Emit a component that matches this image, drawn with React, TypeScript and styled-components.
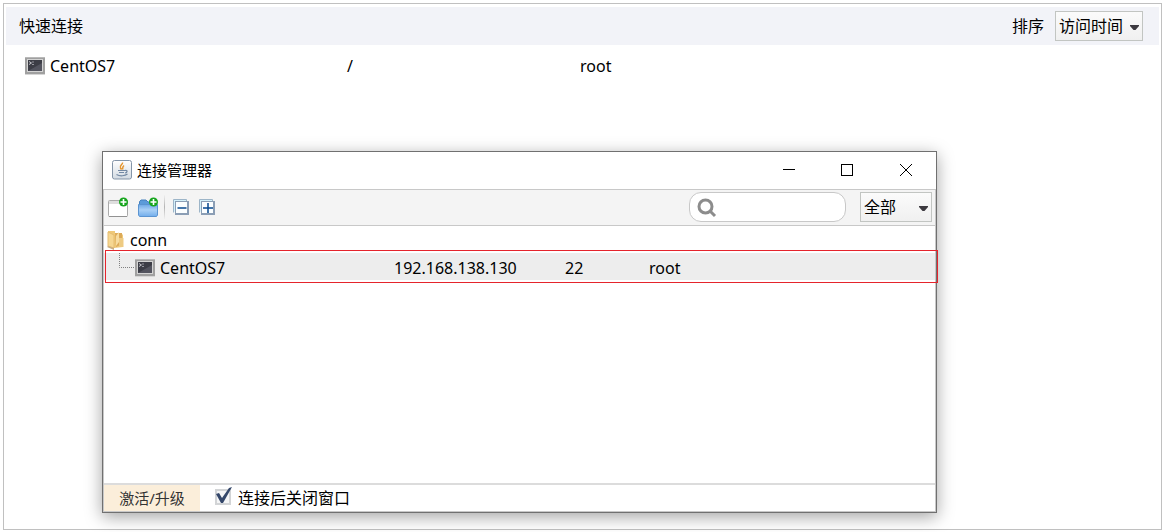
import React from "react";
import styled, { createGlobalStyle } from "styled-components";

const GlobalStyle = createGlobalStyle`
  *, *::before, *::after { box-sizing: border-box; }
  body {
    margin: 0;
    background: #fff;
    color: #000;
    font: 16px/22px "Noto Sans", "Noto Sans CJK SC", sans-serif;
  }
  button, input, select { font: inherit; color: inherit; }
  svg { display: block; flex: none; }
`;

const Page = styled.main`
  position: relative;
  display: flow-root;
  min-height: 100vh;
`;

const Frame = styled.section`
  margin: 3px 4px 2px 3px;
  min-height: calc(100vh - 5px);
  padding: 3px 2px;
  border: 1px solid #c0c0c0;
`;

const Header = styled.header`
  display: flex;
  align-items: center;
  justify-content: space-between;
  height: 38px;
  padding: 0 16px 0 13px;
  background: #f2f3f8;
`;

const Heading = styled.h1`
  margin: 0;
  font-size: 16px;
  font-weight: 400;
`;

const SortLabel = styled.label`
  display: flex;
  align-items: center;
  gap: 11px;
`;

const SelectBox = styled.span<{ $width: number }>`
  position: relative;
  display: block;
  width: ${(p) => p.$width}px;
`;

const Select = styled.select`
  display: block;
  appearance: none;
  width: 100%;
  height: 30px;
  padding: 0 0 0 3px;
  border: 1px solid #c2c5c2;
  border-radius: 0;
  background: linear-gradient(#fbfbfb, #f0f0f0);
`;

const Arrow = styled.svg`
  position: absolute;
  right: 4px;
  top: 14px;
  pointer-events: none;
`;

const Table = styled.table`
  width: 100%;
  border-collapse: collapse;
  table-layout: fixed;
`;

const QuickTable = styled(Table)`
  margin-top: 7px;
`;

const Cell = styled.td<{ $width?: number; $indent?: number; $height: number }>`
  width: ${(p) => (p.$width ? `${p.$width}px` : "auto")};
  height: ${(p) => p.$height}px;
  padding: 0 0 0 ${(p) => p.$indent ?? 0}px;
  white-space: nowrap;
`;

const TreeCell = styled(Cell)`
  padding-top: 2px;
`;

const IconText = styled.span`
  display: flex;
  align-items: center;
  gap: 5px;
`;

const Dialog = styled.section`
  position: absolute;
  left: 102px;
  right: 229px;
  top: 151px;
  border: 1px solid #707070;
  background: #fff;
  box-shadow: 0 4px 16px rgba(0, 0, 0, 0.36);
`;

const TitleBar = styled.header`
  display: flex;
  align-items: center;
  height: 37px;
  padding: 0 1px 2px 9px;
`;

const Title = styled.h2`
  flex: 1;
  margin: 0 0 0 5px;
  font-size: 15px;
  font-weight: 400;
`;

const CaptionButton = styled.button`
  display: grid;
  place-items: center;
  width: 58px;
  height: 35px;
  padding: 0;
  border: 0;
  background: transparent;
`;

const Body = styled.div`
  border: 1px solid #c8c8c8;
`;

const Toolbar = styled.div`
  display: flex;
  align-items: center;
  height: 36px;
  padding: 0 3px 1px 2px;
  border-bottom: 1px solid #c8c8c8;
  background: #f4f4f4;
`;

const ToolGroup = styled.div`
  display: flex;
  gap: 6px;
`;

const ToolButton = styled.button<{ $width: number }>`
  display: grid;
  place-items: center;
  width: ${(p) => p.$width}px;
  height: 24px;
  padding: 0;
  border: 0;
  background: transparent;
`;

const Divider = styled.span`
  width: 1px;
  height: 24px;
  margin: 0 6px 0 4px;
  background: linear-gradient(#f0f0f0, #b4b4b4, #f0f0f0);
`;

const Search = styled.label`
  display: flex;
  align-items: center;
  width: 157px;
  height: 30px;
  margin: 0 14px 0 auto;
  padding: 2px 8px 0 7px;
  border: 1px solid #c8c8c8;
  border-radius: 12px;
  background: #fff;
`;

const SearchInput = styled.input`
  flex: 1;
  min-width: 0;
  padding: 0 0 0 4px;
  border: 0;
  outline: 0;
  background: transparent;
`;

const Tree = styled.div`
  min-height: 257px;
`;

const Folder = styled.div`
  display: flex;
  align-items: center;
  gap: 5px;
  height: 27px;
  padding-left: 3px;
`;

const Selected = styled.div`
  position: relative;
  background: #ededed;

  &::after {
    content: "";
    position: absolute;
    inset: -3px -3px -3px 1px;
    border: 1px solid #e5242c;
    pointer-events: none;
  }
`;

const Branch = styled.svg`
  position: absolute;
  left: 15px;
  top: 0;
`;

const Footer = styled.footer`
  display: flex;
  align-items: center;
  border-top: 2px solid #dcdcdc;
  height: 28px;
`;

const Upgrade = styled.button`
  width: 96px;
  height: 26px;
  padding: 0;
  border: 0;
  background: #fbeeda;
  color: #333;
  font-size: 15px;
`;

const Check = styled.label`
  position: relative;
  display: flex;
  align-items: center;
  gap: 7px;
  margin-left: 15px;
`;

const CheckInput = styled.input`
  appearance: none;
  width: 16px;
  height: 16px;
  margin: 0 0 2px;
  border: 2px solid #d2d4d6;
  background: #f4f5f6;

  &:not(:checked) + svg { display: none; }
`;

const Tick = styled.svg`
  position: absolute;
  left: 0;
  top: 0;
  pointer-events: none;
`;

const DropArrow = () => (
  <Arrow width="9" height="5" viewBox="0 0 9 5" aria-hidden="true">
    <path d="M0 0H9V1L5.5 5H3.5L0 1Z" fill="#3d3a40" />
  </Arrow>
);

const TerminalIcon = () => (
  <svg width="20" height="18" viewBox="0 0 20 18" aria-hidden="true">
    <rect width="20" height="17" fill="#a0a0a0" />
    <path d="M0 0H20V1H0Z" fill="#b9b9b9" />
    <path d="M0 17H20V18H0Z" fill="#d6d6d6" />
    <rect x="2" y="2" width="16" height="13" fill="#d4d4d4" />
    <rect x="3" y="3" width="14" height="11" fill="#3c3d46" />
    <path d="M3 14L17 6V14Z" fill="#53545f" />
    <path d="M4 4.5L6.5 6L4 7.5" stroke="#c4c4ca" fill="none" />
    <path d="M7 5H9M7 7.5H9" stroke="#94959d" />
  </svg>
);

const JavaIcon = () => (
  <svg width="20" height="20" viewBox="0 0 20 20" aria-hidden="true">
    <defs>
      <linearGradient id="java-tile" x2="0" y2="1">
        <stop stopColor="#fff" />
        <stop offset="1" stopColor="#d3dbe3" />
      </linearGradient>
    </defs>
    <rect x=".5" y=".5" width="19" height="18.5" rx="2" fill="url(#java-tile)" stroke="#8495a8" />
    <path d="M10.5 2.5C11 4.5 7 5.5 8.5 8L9.5 9.5M12 5.5C10 7 11 8 10.5 9.5" fill="none" stroke="#e5952c" strokeWidth="1.5" />
    <path d="M6 10.5H13M7 12.5H12M13 10.5C16 10 15.5 12.5 13 13M4.500 14.500C8 16.500 13 16 15.500 14" fill="none" stroke="#7389a4" strokeWidth="1.2" />
  </svg>
);

const PlusBadge = () => (
  <>
    <circle cx="15.5" cy="5" r="4.5" fill="#16a51d" />
    <path d="M12.500 5H18.500M15.500 2V8" stroke="#fff" strokeWidth="1.6" />
  </>
);

const NewWindowIcon = () => (
  <svg width="20" height="20" viewBox="0 0 20 20" aria-hidden="true">
    <rect x=".5" y="3.5" width="19" height="16" rx="1" fill="#fff" stroke="#aaa" />
    <path d="M1 4H19V7H1Z" fill="#dedede" />
    <path d="M1 19.5H19" stroke="#929292" />
    <PlusBadge />
  </svg>
);

const NewFolderIcon = () => (
  <svg width="20" height="20" viewBox="0 0 20 20" aria-hidden="true">
    <defs>
      <linearGradient id="blue-folder" x2="0" y2="1">
        <stop stopColor="#6da7e5" />
        <stop offset=".45" stopColor="#a9d0f6" />
        <stop offset="1" stopColor="#72adeb" />
      </linearGradient>
    </defs>
    <path d="M1.5 8V4.5L3 3H8L10 5H18.5V8" fill="#5c9bd9" stroke="#4580bd" />
    <path d="M.5 7.5H19.5V18L18.5 19.5H1.5L.5 18Z" fill="url(#blue-folder)" stroke="#5b94d1" />
    <PlusBadge />
  </svg>
);

const StackIcon = ({ plus }: { plus?: boolean }) => (
  <svg width="16" height="16" viewBox="0 0 16 16" aria-hidden="true">
    <path d="M.5 13.500V.5H13.500V3" fill="#d4f0fa" stroke="#9db5c8" />
    <rect x="2.500" y="2.500" width="13" height="13" fill="#fbfeff" stroke="#8b9eb5" />
    <path d="M3 14.500H15M14.500 3V15" stroke="#8b9eb5" />
    <path d={plus ? "M4 9H14M9 4V14" : "M4.500 9H13.500"} stroke="#07488f" strokeWidth="1.5" />
  </svg>
);

const ConnFolderIcon = () => (
  <svg width="18" height="20" viewBox="0 0 18 20" aria-hidden="true">
    <path d="M1 1H8V3H14L16 5V17L7 18L1 17Z" fill="#efc979" />
    <path d="M8 3H15V14L9 17Z" fill="#dcaa59" />
    <path d="M9 6L12 2V12L9 16Z" fill="#f7dca0" />
    <path d="M1 2L7 5V18L1 16Z" fill="#f6d791" stroke="#e6bd70" />
    <path d="M12 8H16.500V17H12Z" fill="#eecb83" />
    <path d="M0 17L7 20V18L1 16Z" fill="#c9ad83" />
  </svg>
);

const connections = [{ name: "CentOS7", host: "192.168.138.130", port: "22", user: "root" }];
const recent = [{ name: "CentOS7", path: "/", user: "root" }];

export default function App() {
  return (
    <Page>
      <GlobalStyle />
      <Frame>
        <Header>
          <Heading>快速连接</Heading>
          <SortLabel>
            排序
            <SelectBox $width={88}>
              <Select defaultValue="time">
                <option value="time">访问时间</option>
              </Select>
              <DropArrow />
            </SelectBox>
          </SortLabel>
        </Header>
        <QuickTable>
          <tbody>
            {recent.map((r) => (
              <tr key={r.name}>
                <Cell $height={28} $width={341} $indent={19}>
                  <IconText><TerminalIcon />{r.name}</IconText>
                </Cell>
                <Cell $height={28} $width={233}>{r.path}</Cell>
                <Cell $height={28}>{r.user}</Cell>
              </tr>
            ))}
          </tbody>
        </QuickTable>
      </Frame>

      <Dialog role="dialog" aria-labelledby="manager-title">
        <TitleBar>
          <JavaIcon />
          <Title id="manager-title">连接管理器</Title>
          <CaptionButton aria-label="最小化">
            <svg width="14" height="12" viewBox="0 0 14 12"><path d="M0 5.5H12" stroke="#000" /></svg>
          </CaptionButton>
          <CaptionButton aria-label="最大化">
            <svg width="14" height="12" viewBox="0 0 14 12"><rect x=".5" y=".5" width="11" height="11" fill="none" stroke="#000" /></svg>
          </CaptionButton>
          <CaptionButton aria-label="关闭">
            <svg width="12" height="12" viewBox="0 0 12 12"><path d="M0 0L12 12M12 0L0 12" stroke="#000" /></svg>
          </CaptionButton>
        </TitleBar>
        <Body>
          <Toolbar>
            <ToolGroup>
              <ToolButton $width={24} aria-label="新建连接"><NewWindowIcon /></ToolButton>
              <ToolButton $width={24} aria-label="新建文件夹"><NewFolderIcon /></ToolButton>
            </ToolGroup>
            <Divider />
            <ToolGroup>
              <ToolButton $width={20} aria-label="全部折叠"><StackIcon /></ToolButton>
              <ToolButton $width={20} aria-label="全部展开"><StackIcon plus /></ToolButton>
            </ToolGroup>
            <Search>
              <svg width="20" height="20" viewBox="0 0 20 20" aria-hidden="true">
                <circle cx="8.5" cy="8.5" r="6.5" fill="none" stroke="#8c8c8c" strokeWidth="3" />
                <path d="M13 13L18 18" stroke="#8c8c8c" strokeWidth="3" />
              </svg>
              <SearchInput type="text" aria-label="搜索" />
            </Search>
            <SelectBox $width={72}>
              <Select defaultValue="all" aria-label="类型">
                <option value="all">全部</option>
              </Select>
              <DropArrow />
            </SelectBox>
          </Toolbar>
          <Tree>
            <Folder><ConnFolderIcon />conn</Folder>
            <Selected>
              <Branch width="16" height="15" viewBox="0 0 16 15" aria-hidden="true">
                <path d="M.5 0V14.5H16" fill="none" stroke="#808080" strokeDasharray="1 1" />
              </Branch>
              <Table>
                <tbody>
                  {connections.map((c) => (
                    <tr key={c.name}>
                      <TreeCell $height={27} $width={290} $indent={31}>
                        <IconText><TerminalIcon />{c.name}</IconText>
                      </TreeCell>
                      <TreeCell $height={27} $width={171}>{c.host}</TreeCell>
                      <TreeCell $height={27} $width={84}>{c.port}</TreeCell>
                      <TreeCell $height={27}>{c.user}</TreeCell>
                    </tr>
                  ))}
                </tbody>
              </Table>
            </Selected>
          </Tree>
          <Footer>
            <Upgrade>激活/升级</Upgrade>
            <Check>
              <CheckInput type="checkbox" defaultChecked />
              <Tick width="17" height="18" viewBox="0 0 17 18" aria-hidden="true">
                <path d="M1 7L4 6L7 11L14 1L17 0L8 16H6Z" fill="#34476a" />
              </Tick>
              连接后关闭窗口
            </Check>
          </Footer>
        </Body>
      </Dialog>
    </Page>
  );
}
